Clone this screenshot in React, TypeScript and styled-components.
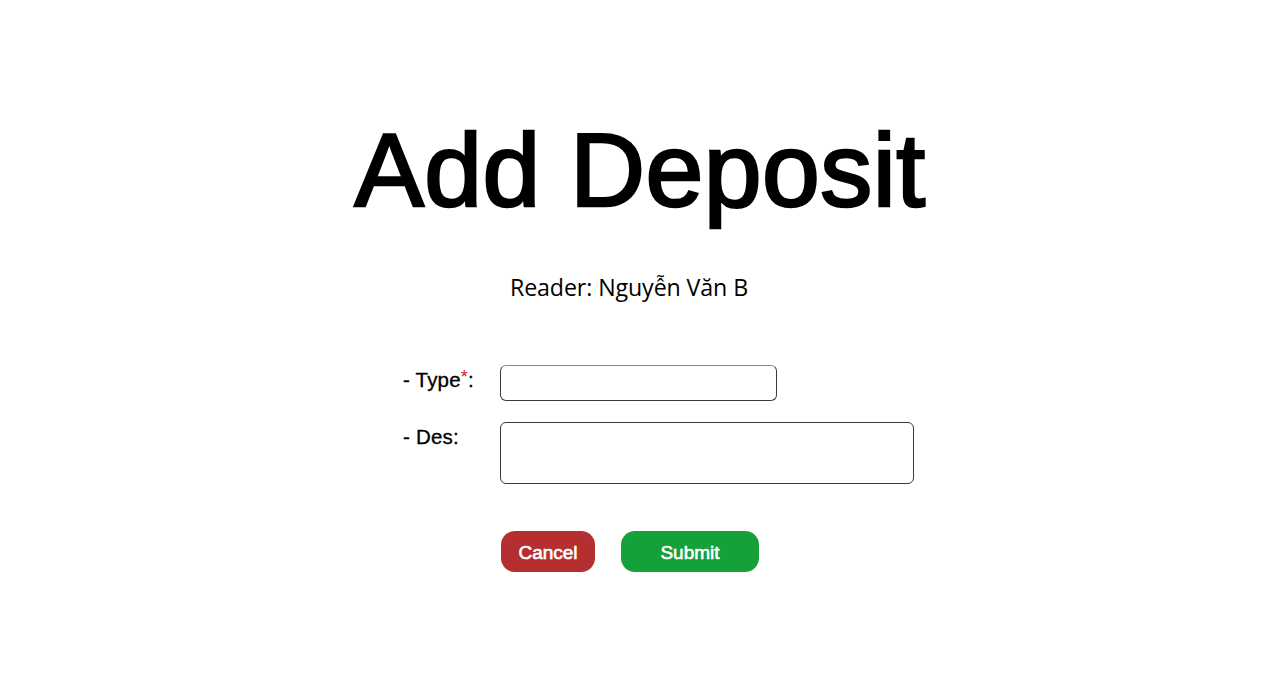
import React from "react";
import styled, { createGlobalStyle } from "styled-components";

const Global = createGlobalStyle`
  html, body { margin: 0; padding: 0; background: #ffffff; }
  body { font-family: "Liberation Sans", Arial, sans-serif; color: #000; }
`;

const Page = styled.main`
  width: 1280px;
  height: 700px;
  display: flex;
  flex-direction: column;
  align-items: center;
  padding-top: 118px;
  box-sizing: border-box;
`;

const Title = styled.h1`
  margin: 0;
  font-family: "Liberation Sans", Arial, sans-serif;
  font-weight: 400;
  font-size: 104px;
  line-height: 104px;
  letter-spacing: 0.4px;
  -webkit-text-stroke: 2.6px #000;
`;

const Reader = styled.p`
  margin: 50px 0 0 -22px;
  font-family: "Open Sans", sans-serif;
  font-size: 23.2px;
  line-height: 30px;
  letter-spacing: -0.1px;
`;

const Form = styled.form`
  align-self: flex-start;
  margin: 63px 0 0 403px;
  display: grid;
  grid-template-columns: 97px auto;
  row-gap: 21px;
  align-items: start;
`;

const Label = styled.label`
  font-size: 20.5px;
  line-height: 24px;
  padding-top: 3px;
  letter-spacing: 0.2px;
  -webkit-text-stroke: 0.3px #000;
`;

const Required = styled.span`
  color: #e8141b;
  font-size: 18px;
  line-height: 0;
  vertical-align: 4px;
  -webkit-text-stroke: 0;
`;

const Field = styled.input<{ $w: number; $h: number }>`
  box-sizing: border-box;
  width: ${(p) => p.$w}px;
  height: ${(p) => p.$h}px;
  border: 1px solid #3a3a3a;
  border-top-color: #8a8a8a;
  border-radius: 6px;
  background: #fff;
  outline: none;
  padding: 0 8px;
`;

const Area = styled.textarea<{ $w: number; $h: number }>`
  box-sizing: border-box;
  width: ${(p) => p.$w}px;
  height: ${(p) => p.$h}px;
  border: 1px solid #3a3a3a;
  border-radius: 6px;
  background: #fff;
  outline: none;
  resize: none;
  padding: 6px 8px;
  display: block;
`;

const Actions = styled.div`
  grid-column: 2;
  display: flex;
  gap: 26px;
  margin-top: 26px;
  padding-left: 1px;
`;

const Button = styled.button<{ $bg: string; $w: number }>`
  width: ${(p) => p.$w}px;
  height: 41px;
  border: none;
  border-radius: 14px;
  background: ${(p) => p.$bg};
  color: #fff;
  font-family: "Liberation Sans", Arial, sans-serif;
  font-weight: 400;
  font-size: 19px;
  -webkit-text-stroke: 0.6px #fff;
  cursor: pointer;
  padding: 2px 0 0;
`;

export default function App() {
  return (
    <>
      <Global />
      <Page>
        <Title>Add Deposit</Title>
        <Reader>Reader: Nguyễn Văn B</Reader>
        <Form onSubmit={(e) => e.preventDefault()}>
          <Label htmlFor="type">
            - Type<Required>*</Required>:
          </Label>
          <Field id="type" $w={277} $h={36} />
          <Label htmlFor="des">- Des:</Label>
          <Area id="des" $w={414} $h={62} />
          <Actions>
            <Button type="button" $bg="#b52f30" $w={94}>Cancel</Button>
            <Button type="submit" $bg="#16a03a" $w={138}>Submit</Button>
          </Actions>
        </Form>
      </Page>
    </>
  );
}
